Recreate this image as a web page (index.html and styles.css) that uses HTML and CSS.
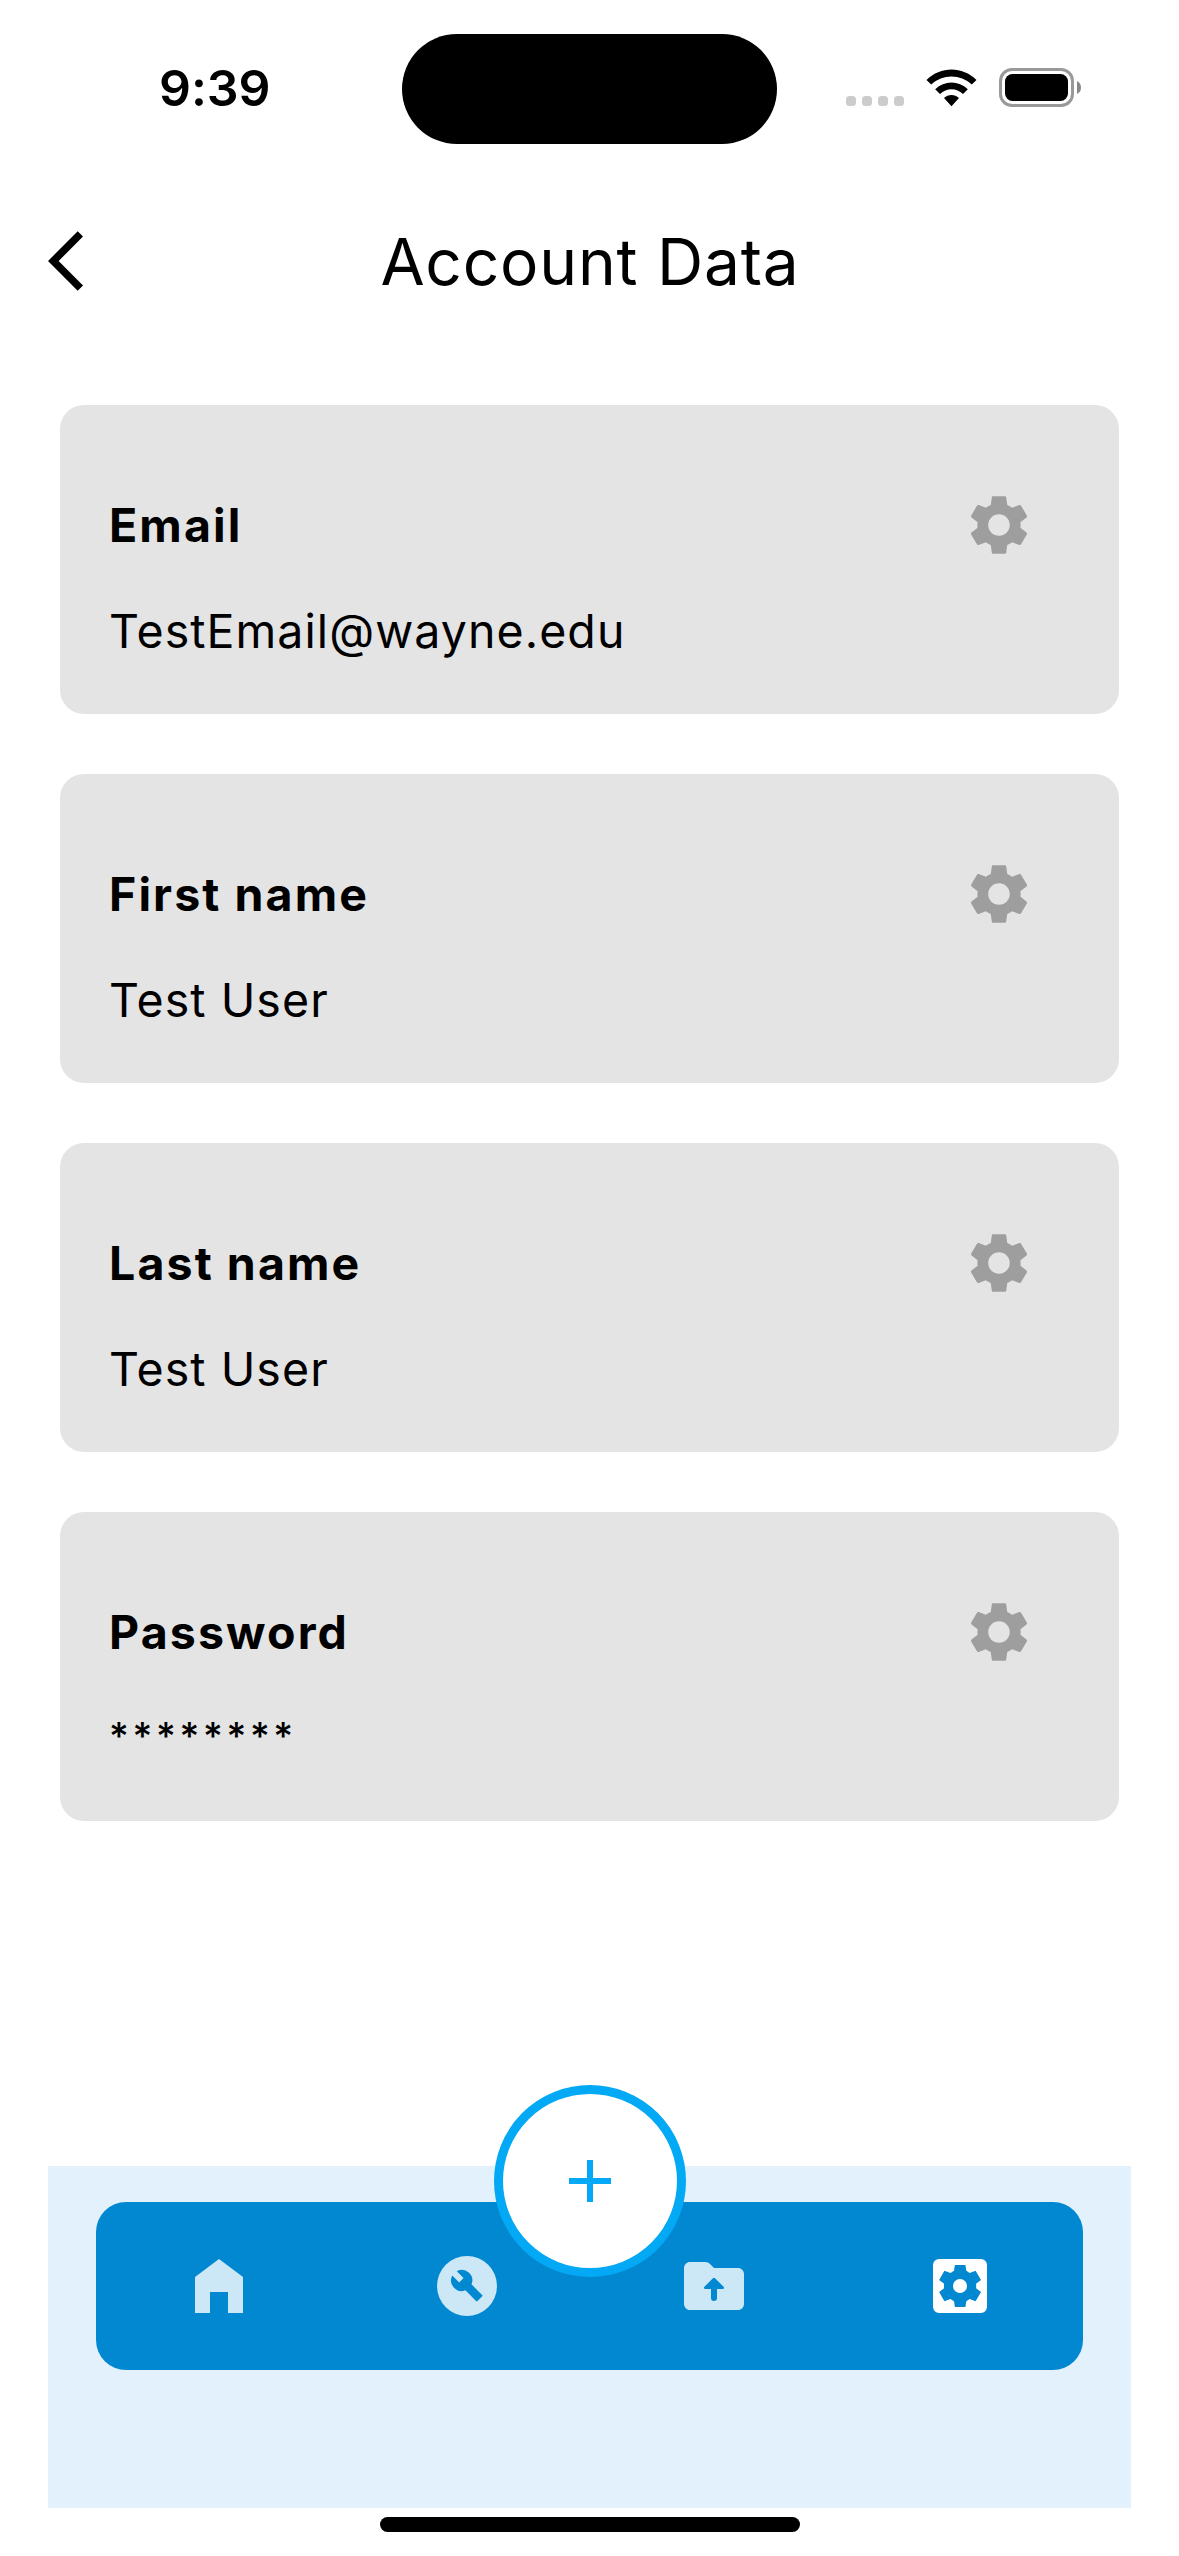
FILE: index.html
```html
<!DOCTYPE html>
<html lang="en">
<head>
<meta charset="utf-8">
<title>Account Data</title>
<link rel="stylesheet" href="styles.css">
</head>
<body>
<svg class="defs" width="0" height="0" aria-hidden="true">
  <symbol id="gear" viewBox="0 0 24 24"><path d="M19.14,12.94c0.04-0.3,0.06-0.61,0.06-0.94c0-0.32-0.02-0.64-0.07-0.94l2.03-1.58c0.18-0.14,0.23-0.41,0.12-0.61l-1.92-3.32c-0.12-0.22-0.37-0.29-0.59-0.22l-2.39,0.96c-0.5-0.38-1.03-0.7-1.62-0.94L14.4,2.81c-0.04-0.24-0.24-0.41-0.48-0.41h-3.84c-0.24,0-0.43,0.17-0.47,0.41L9.25,5.35C8.66,5.59,8.12,5.92,7.63,6.29L5.24,5.33c-0.22-0.08-0.47,0-0.59,0.22L2.74,8.87C2.62,9.08,2.66,9.34,2.86,9.48l2.03,1.58C4.84,11.36,4.8,11.69,4.8,12s0.02,0.64,0.07,0.94l-2.03,1.58c-0.18,0.14-0.23,0.41-0.12,0.61l1.92,3.32c0.12,0.22,0.37,0.29,0.59,0.22l2.39-0.96c0.5,0.38,1.03,0.7,1.62,0.94l0.36,2.54c0.05,0.24,0.24,0.41,0.48,0.41h3.84c0.24,0,0.44-0.17,0.47-0.41l0.36-2.54c0.59-0.24,1.13-0.56,1.62-0.94l2.39,0.96c0.22,0.08,0.47,0,0.59-0.22l1.92-3.32c0.12-0.22,0.07-0.47-0.12-0.61L19.14,12.94z M12,15.6c-1.98,0-3.6-1.62-3.6-3.6s1.62-3.6,3.6-3.6s3.6,1.62,3.6,3.6S13.98,15.6,12,15.6z"/></symbol>
</svg>
<div class="screen">
  <header class="status">
    <span class="time">9:39</span>
    <span class="island"></span>
    <div class="indicators">
      <span class="dots"><i></i><i></i><i></i><i></i></span>
      <svg class="wifi" viewBox="0 0 51 38"><path d="M0.5 10.9C14.5-3.1 36.5-3.1 50.5 10.9L45.8 15.6C34.5 4.8 16.5 4.8 5.2 15.6ZM9.2 20.2C18.4 11.3 32.6 11.3 41.8 20.2L37 25C30.5 18.6 20.5 18.6 14 25ZM18 29C22.2 25 28.8 25 33 29L25.5 37.3Z"/></svg>
      <svg class="battery" viewBox="0 0 82 39"><rect x="1.5" y="1.5" width="72" height="36" rx="11.5" fill="none" stroke="#999" stroke-width="3"/><rect x="6" y="6" width="63" height="27" rx="7.5"/><path d="M78 13Q82 15 82 19.5T78 26Z" fill="#888"/></svg>
    </div>
  </header>
  <div class="appbar">
    <svg class="back" viewBox="0 0 24 24"><path d="M11.67 3.87L9.9 2.1 0 12l9.9 9.9 1.77-1.77L3.54 12z"/></svg>
    <h1 class="title">Account Data</h1>
  </div>
  <main class="cards">
    <section class="card">
      <div class="card-head"><h2 class="label">Email</h2><svg class="gear"><use href="#gear"/></svg></div>
      <p class="value">TestEmail@wayne.edu</p>
    </section>
    <section class="card">
      <div class="card-head"><h2 class="label">First name</h2><svg class="gear"><use href="#gear"/></svg></div>
      <p class="value">Test User</p>
    </section>
    <section class="card">
      <div class="card-head"><h2 class="label">Last name</h2><svg class="gear"><use href="#gear"/></svg></div>
      <p class="value">Test User</p>
    </section>
    <section class="card">
      <div class="card-head"><h2 class="label">Password</h2><svg class="gear"><use href="#gear"/></svg></div>
      <p class="value masked">********</p>
    </section>
  </main>
  <footer class="dock">
    <nav class="bar">
      <svg class="nav-icon" viewBox="0 0 24 24"><path d="M12 3L4 9v12h5v-7h6v7h5V9z"/></svg>
      <svg class="nav-icon" viewBox="0 0 24 24"><path fill-rule="evenodd" d="M12 2a10 10 0 1 0 0 20a10 10 0 1 0 0-20ZM8.6 7.05A3.5 3.5 0 0 1 13.5 11.45L17.1 15.05Q17.3 15.2 17.1 15.4L15.4 17.05Q15.2 17.2 15 17L11.5 13.4A3.5 3.5 0 0 1 7.1 8.5L9.4 10.8 10.85 9.35Z"/></svg>
      <svg class="nav-icon" viewBox="0 0 24 24"><path fill-rule="evenodd" d="M20 6h-8l-1.41-1.41Q10 4 9.17 4H4c-1.1 0-2 .9-2 2v12c0 1.1.9 2 2 2h16c1.1 0 2-.9 2-2V8c0-1.1-.9-2-2-2ZM13 13v3a1 1 0 0 1-2 0v-3H9.2Q8.3 12.9 8.8 12.25L11.65 9.4Q12 9.05 12.35 9.4L15.2 12.25Q15.7 12.9 14.8 13Z"/></svg>
      <svg class="nav-icon active" viewBox="0 0 24 24"><path fill-rule="evenodd" d="M5 3h14a2 2 0 0 1 2 2v14a2 2 0 0 1-2 2H5a2 2 0 0 1-2-2V5a2 2 0 0 1 2-2ZM10.3 5L10 6.95Q9.5 7.2 8.85 7.7L6.8 6.95 5.05 10 6.7 11.25Q6.6 12 6.7 12.75L5.05 14 6.8 17.05 8.85 16.3Q9.5 16.8 10 17.05L10.3 19H13.8L14.1 17.05Q14.6 16.8 15.2 16.3L17.2 17.05 19 14 17.35 12.75Q17.45 12 17.35 11.25L19 10 17.2 6.95 15.2 7.7Q14.6 7.2 14.1 6.95L13.8 5ZM12 9.65a2.35 2.35 0 1 1 0 4.7a2.35 2.35 0 1 1 0-4.7Z"/></svg>
    </nav>
    <button class="fab" aria-label="Add"><svg viewBox="0 0 42 42"><path d="M18 0h6v18h18v6H24v18h-6V24H0v-6h18z"/></svg></button>
  </footer>
  <div class="home-line"></div>
</div>
</body>
</html>
```
FILE: styles.css
```css
* { box-sizing: border-box; }
body { margin: 0; background: #fff; color: #000; font-family: Inter, "Liberation Sans", sans-serif; }
h1, h2, p { margin: 0; white-space: nowrap; }
svg { display: block; flex: none; }
.defs { position: absolute; }
.screen { width: 1179px; height: 2556px; display: flex; flex-direction: column; overflow: hidden; }

.status { display: grid; grid-template-columns: 402px 375px 402px; height: 177px; padding-top: 34px; flex: none; }
.time { padding-left: 159px; padding-top: 24px; font-size: 50px; line-height: 60px; font-weight: 600; letter-spacing: -0.1px; }
.island { height: 110px; border-radius: 55px; background: #000; }
.indicators { display: flex; align-items: flex-start; padding: 34px 0 0 69px; }
.dots { display: flex; gap: 6px; padding-top: 28px; margin-right: 22px; }
.dots i { width: 10px; height: 10px; border-radius: 3.5px; background: #ccc; }
.wifi { width: 51px; height: 38px; margin: 1px 22px 0 0; }
.battery { width: 82px; height: 39px; }

.appbar { display: flex; align-items: center; height: 168px; padding: 0 48px; flex: none; }
.back { width: 72px; height: 72px; }
.title { flex: 1; padding: 2px 71px 0 0; text-align: center; font-size: 64px; line-height: 80px; font-weight: 400; letter-spacing: 0.8px; }

.cards { display: flex; flex-direction: column; gap: 60px; padding: 60px 60px 0; flex: none; }
.card { height: 309px; padding: 84px 84px 0 49px; border-radius: 24px; background: #e4e4e4; }
.card-head { display: flex; align-items: center; justify-content: space-between; height: 72px; }
.gear { width: 72px; height: 72px; fill: #9e9e9e; }
.label { padding-bottom: 1px; font-size: 46.5px; line-height: 60px; font-weight: 700; letter-spacing: 2.1px; }
.value { margin-top: 40px; font-size: 46.5px; line-height: 60px; letter-spacing: 1.07px; }
.masked { margin-top: 38px; font-size: 38px; font-weight: 500; letter-spacing: 3.7px; }

.dock { position: relative; margin: 345px 48px 0; height: 342px; padding: 36px 48px 0; background: #e3f1fd; flex: none; }
.bar { display: grid; grid-template-columns: 73px 72px 71px 72px; column-gap: 175px; align-items: center; height: 168px; padding: 0 87px; border-radius: 30px; background: #0288d1; }
.nav-icon { width: 72px; height: 72px; fill: #cce7f6; }
.nav-icon.active { fill: #fff; }
.fab { position: absolute; left: 445.5px; top: -81px; width: 192px; height: 192px; padding: 0; border: 9px solid #03a9f4; border-radius: 50%; background: #fff; display: flex; align-items: center; justify-content: center; }
.fab svg { width: 42px; height: 42px; fill: #03a9f4; }
.home-line { width: 420px; height: 15px; margin: 9px 0 0 380px; border-radius: 7.5px; background: #000; flex: none; }
```
